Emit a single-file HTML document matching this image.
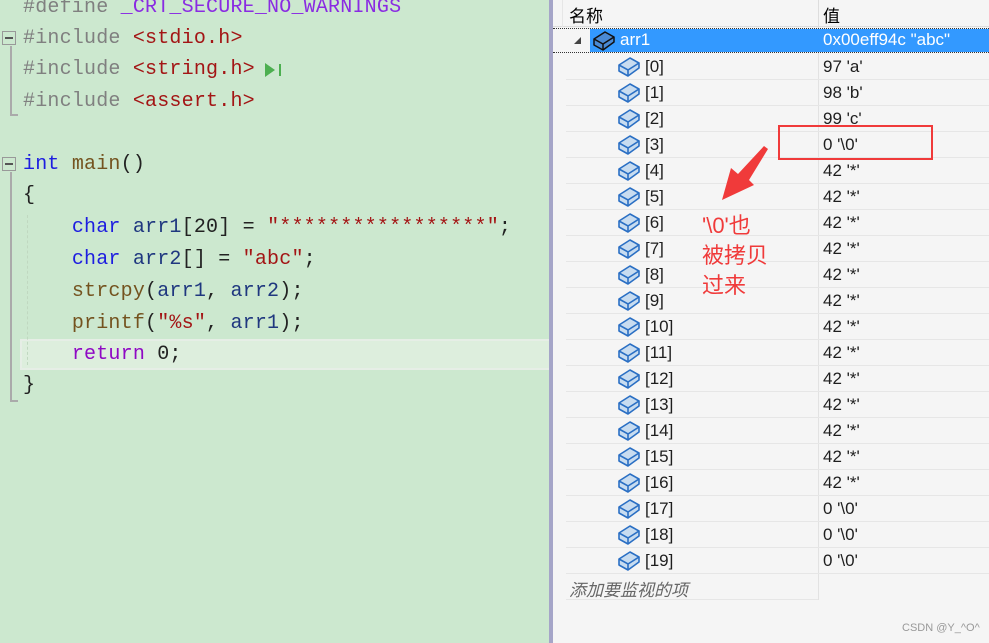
<!DOCTYPE html>
<html><head><meta charset="utf-8"><style>
*{margin:0;padding:0;box-sizing:border-box}
body{width:989px;height:643px;overflow:hidden;background:#f5f5f5;position:relative;font-family:"Liberation Sans","Noto Sans CJK SC",sans-serif}
#ed{position:absolute;left:0;top:0;width:549px;height:643px;background:#cce8cf;overflow:hidden}
.l{position:absolute;left:23px;font-family:"Liberation Mono","Noto Sans CJK SC",monospace;font-size:20px;letter-spacing:0.2px;white-space:pre;line-height:30px;color:#222}
.pp{color:#808080}.mac{color:#8a2be2}.str{color:#a31515}.kw{color:#1d1de0}.fn{color:#74531f}.var{color:#1f377f}.ret{color:#8f08c4}
#sep{position:absolute;left:549px;top:0;width:4px;height:643px;background:#a5a5c8}
.row{position:absolute;left:566px;right:0;height:26px;border-bottom:1px solid #e6e6e6;font-size:17px;color:#1e1e1e}
.row .n{position:absolute;left:54px;top:3px}
.row .v{position:absolute;left:257px;top:3px}
.row svg{position:absolute;left:51px;top:3px}
</style></head><body>
<div id="ed">
<div class="l" style="top:-7px"><span class="pp">#define </span><span class="mac">_CRT_SECURE_NO_WARNINGS</span></div>
<div class="l" style="top:24px"><span class="pp">#include </span><span class="str">&lt;stdio.h&gt;</span></div>
<div class="l" style="top:55px"><span class="pp">#include </span><span class="str">&lt;string.h&gt;</span></div>
<div class="l" style="top:87px"><span class="pp">#include </span><span class="str">&lt;assert.h&gt;</span></div>
<div class="l" style="top:150px"><span class="kw">int</span> <span class="fn">main</span>()</div>
<div class="l" style="top:181px">{</div>
<div style="position:absolute;left:20px;top:339px;width:529px;height:31px;background:#ddeedd;border:2px solid #e6eee6;border-right:none"></div>
<div class="l" style="top:213px">    <span class="kw">char</span> <span class="var">arr1</span>[20] = <span class="str">"*****************"</span>;</div>
<div class="l" style="top:245px">    <span class="kw">char</span> <span class="var">arr2</span>[] = <span class="str">"abc"</span>;</div>
<div class="l" style="top:277px">    <span class="fn">strcpy</span>(<span class="var">arr1</span>, <span class="var">arr2</span>);</div>
<div class="l" style="top:309px">    <span class="fn">printf</span>(<span class="str">"%s"</span>, <span class="var">arr1</span>);</div>
<div class="l" style="top:340px">    <span class="ret">return</span> 0;</div>
<div class="l" style="top:371px">}</div>
<div style="position:absolute;left:2px;top:31px;width:14px;height:14px;border:1px solid #999;background:#cce8cf"></div>
<div style="position:absolute;left:5px;top:37px;width:8px;height:2px;background:#555"></div>
<div style="position:absolute;left:10px;top:46px;width:2px;height:70px;background:#aaa"></div>
<div style="position:absolute;left:10px;top:114px;width:8px;height:2px;background:#aaa"></div>
<div style="position:absolute;left:2px;top:157px;width:14px;height:14px;border:1px solid #999;background:#cce8cf"></div>
<div style="position:absolute;left:5px;top:163px;width:8px;height:2px;background:#555"></div>
<div style="position:absolute;left:10px;top:172px;width:2px;height:230px;background:#aaa"></div>
<div style="position:absolute;left:10px;top:400px;width:8px;height:2px;background:#aaa"></div>
<div style="position:absolute;left:27px;top:215px;width:1px;height:150px;border-left:1px dashed #c0d8c0"></div>
<svg style="position:absolute;left:265px;top:62px" width="20" height="16"><polygon points="0,1 10,8 0,15" fill="#4caf50"/><rect x="14" y="2" width="2" height="12" fill="#4caf50"/></svg>
</div>
<div id="sep"></div>
<div style="position:absolute;left:553px;top:0;right:0;height:27px;border-bottom:1px solid #ddd;font-size:17px">
<span style="position:absolute;left:16px;top:2px">名称</span>
<span style="position:absolute;left:270px;top:2px">值</span>
<div style="position:absolute;left:265px;top:0;width:1px;height:27px;background:#ddd"></div>
<div style="position:absolute;left:9px;top:0;width:1px;height:27px;background:#e6e6e6"></div>
</div>
<div style="position:absolute;left:818px;top:27px;width:1px;height:573px;background:#e2e2e2"></div>
<div style="position:absolute;left:553px;top:28px;right:0;height:25px;border-top:1px dotted #333;border-bottom:1px dotted #333"></div>
<div style="position:absolute;left:590px;top:29px;right:0;height:23px;background:#3399ff;color:#fff;font-size:17px">
<svg style="position:absolute;left:2px;top:1px" width="24" height="22"><path d="M2 9 L13 2 L22 7 L22 12 L11 20 L2 15 Z" fill="#4a8ad4" stroke="#111" stroke-width="1.5" stroke-linejoin="round"/><path d="M2 9 L11 14 L22 7 M11 14 L11 20" fill="none" stroke="#111" stroke-width="1.5"/></svg>
<span style="position:absolute;left:30px;top:1px">arr1</span>
<span style="position:absolute;left:233px;top:1px">0x00eff94c "abc"</span>
</div>
<svg style="position:absolute;left:573px;top:36px" width="10" height="10"><polygon points="8,1 8,8 1,8" fill="#444"/></svg>
<div id="rows"></div>
<div style="position:absolute;left:566px;top:574px;width:252px;height:26px;border-bottom:1px solid #e6e6e6;font-size:17px;color:#666;font-style:italic;padding:2px 0 0 3px">添加要监视的项</div>
<div style="position:absolute;left:778px;top:125px;width:155px;height:35px;border:2px solid #f03a3a"></div>
<svg style="position:absolute;left:715px;top:140px" width="60" height="70"><path d="M49 6 L53 9 L34 40 L39 45 L7 60 L16 28 L23 34 Z" fill="#f03a3a"/></svg>
<div style="position:absolute;left:702px;top:211px;font-size:22px;line-height:30px;color:#f03a3a">'\0'也<br>被拷贝<br>过来</div>
<div style="position:absolute;left:902px;top:622px;font-size:11px;color:#999">CSDN @Y_^O^</div>
<script>
var v=["97 'a'","98 'b'","99 'c'","0 '\\0'"];for(var i=4;i<17;i++)v.push("42 '*'");v.push("0 '\\0'","0 '\\0'","0 '\\0'");
var h="";for(var i=0;i<20;i++){h+='<div class="row" style="top:'+(54+26*i)+'px"><svg width="24" height="22" style="left:51px;top:2px"><path d="M2 9 L13 2 L22 7 L22 12 L11 20 L2 15 Z" fill="#c8dcf0" stroke="#2a6fc4" stroke-width="1.6" stroke-linejoin="round"/><path d="M2 9 L11 14 L22 7 M11 14 L11 20" fill="none" stroke="#2a6fc4" stroke-width="1.6"/></svg><span class="n" style="left:79px">['+i+']</span><span class="v">'+v[i]+'</span></div>';}
document.getElementById("rows").innerHTML=h;
</script>
</body></html>
